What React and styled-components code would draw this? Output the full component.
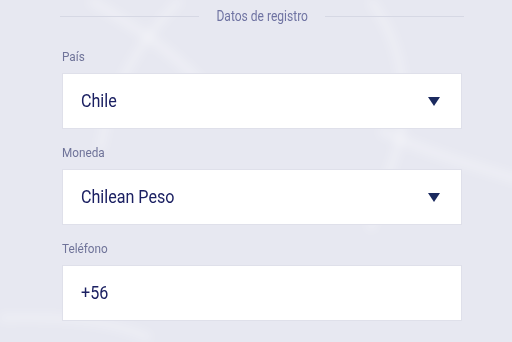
import React from 'react';
import styled, { createGlobalStyle } from 'styled-components';

const GlobalStyle = createGlobalStyle`
    html, body {
        margin: 0;
        padding: 0;
        background: #e7e8f1;
    }
    body {
        font-family: Roboto, "Noto Sans", sans-serif;
        overflow: hidden;
    }
`;

const Page = styled.div`
    position: relative;
    width: 512px;
    height: 342px;
    overflow: hidden;
    background: #e7e8f1;
`;

const Swooshes = styled.svg`
    position: absolute;
    inset: 0;
    width: 512px;
    height: 342px;
    pointer-events: none;
`;

const Form = styled.div`
    position: relative;
    width: 404px;
    margin-left: 60px;
    display: flex;
    flex-direction: column;
`;

const Header = styled.div`
    height: 32px;
    display: flex;
    align-items: center;
    gap: 10px;
    margin-bottom: 16px;
`;

const Line = styled.div`
    flex: 1;
    height: 1px;
    background: #d6d8e4;
`;

const Title = styled.span`
    font-size: 14px;
    color: #6f73a2;
    transform: scaleX(0.86);
`;

const Field = styled.div`
    display: flex;
    flex-direction: column;
    padding: 0 2px;
    margin-bottom: 15px;
`;

const Label = styled.label`
    font-size: 13.5px;
    line-height: 16px;
    color: #6f7399;
    margin-bottom: 9px;
    transform: scaleX(0.87);
    transform-origin: left center;
`;

const Box = styled.div`
    height: 56px;
    box-sizing: border-box;
    background: #ffffff;
    border: 1px solid #dfe0ea;
    display: flex;
    align-items: center;
    justify-content: space-between;
    padding: 0 21px 0 18px;
`;

const Value = styled.span`
    font-size: 18.5px;
    color: #1b2062;
    transform: scaleX(0.87);
    transform-origin: left center;
`;

const Arrow = styled.svg`
    width: 12px;
    height: 9px;
    fill: #1b2a5f;
`;

const SelectField = ({ label, value }) => (
    <Field>
        <Label>{label}</Label>
        <Box>
            <Value>{value}</Value>
            <Arrow viewBox="0 0 12 9">
                <polygon points="0,0 12,0 6,9" />
            </Arrow>
        </Box>
    </Field>
);

const InputField = ({ label, value }) => (
    <Field>
        <Label>{label}</Label>
        <Box>
            <Value>{value}</Value>
        </Box>
    </Field>
);

export default function App() {
    return (
        <Page>
            <GlobalStyle />
            <Swooshes viewBox="0 0 512 342">
                <defs>
                    <filter id="soft">
                        <feGaussianBlur stdDeviation="4" />
                    </filter>
                </defs>
                <g fill="none" stroke="#ffffff" strokeOpacity="0.25" filter="url(#soft)">
                    <path d="M90 0 C140 30 190 60 230 120" strokeWidth="10" />
                    <path d="M180 0 C140 40 110 90 100 150" strokeWidth="8" />
                    <path d="M370 0 C400 40 410 90 400 140 C390 170 380 200 370 230" strokeWidth="8" />
                    <path d="M380 130 C420 150 470 165 520 180" strokeWidth="10" />
                    <path d="M0 318 C60 316 110 320 150 338" strokeWidth="8" />
                </g>
            </Swooshes>
            <Form>
                <Header>
                    <Line />
                    <Title>Datos de registro</Title>
                    <Line />
                </Header>
                <SelectField label="País" value="Chile" />
                <SelectField label="Moneda" value="Chilean Peso" />
                <InputField label="Teléfono" value="+56" />
            </Form>
        </Page>
    );
}
